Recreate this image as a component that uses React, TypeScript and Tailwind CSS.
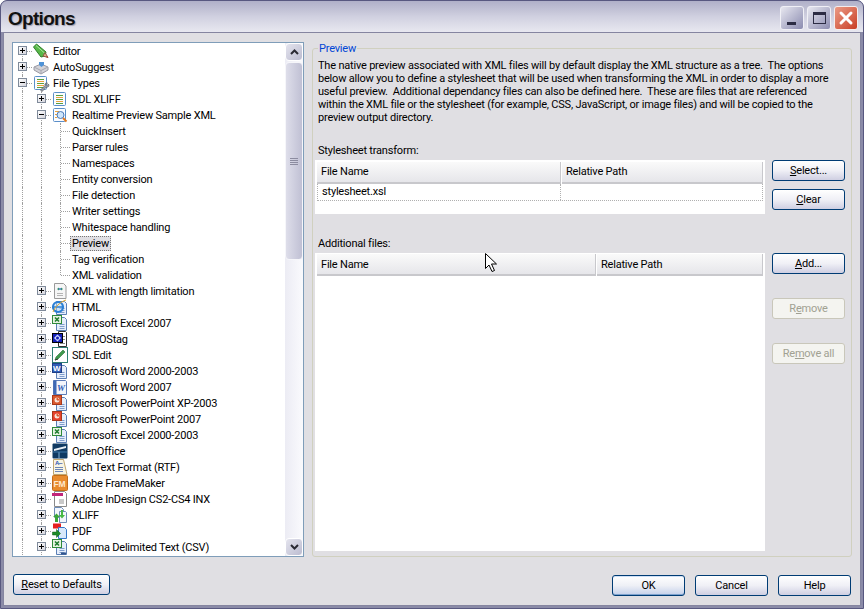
import React from "react";

type IconName =
  | "pencil" | "cube" | "filetypes" | "list" | "preview" | "xml" | "ie" | "excel" | "trados" | "edit"
  | "word" | "word07" | "ppt" | "ppt07" | "excel03" | "office" | "rtf" | "fm" | "indesign" | "xliff" | "pdf" | "csv";

interface TreeRow {
  label: string;
  depth: number;
  icon?: IconName;
  toggle?: "plus" | "minus";
  selected?: boolean;
}

const rows: TreeRow[] = [
  { label: "Editor", depth: 0, icon: "pencil", toggle: "plus" },
  { label: "AutoSuggest", depth: 0, icon: "cube", toggle: "plus" },
  { label: "File Types", depth: 0, icon: "filetypes", toggle: "minus" },
  { label: "SDL XLIFF", depth: 1, icon: "list", toggle: "plus" },
  { label: "Realtime Preview Sample XML", depth: 1, icon: "preview", toggle: "minus" },
  { label: "QuickInsert", depth: 2 },
  { label: "Parser rules", depth: 2 },
  { label: "Namespaces", depth: 2 },
  { label: "Entity conversion", depth: 2 },
  { label: "File detection", depth: 2 },
  { label: "Writer settings", depth: 2 },
  { label: "Whitespace handling", depth: 2 },
  { label: "Preview", depth: 2, selected: true },
  { label: "Tag verification", depth: 2 },
  { label: "XML validation", depth: 2 },
  { label: "XML with length limitation", depth: 1, icon: "xml", toggle: "plus" },
  { label: "HTML", depth: 1, icon: "ie", toggle: "plus" },
  { label: "Microsoft Excel 2007", depth: 1, icon: "excel", toggle: "plus" },
  { label: "TRADOStag", depth: 1, icon: "trados", toggle: "plus" },
  { label: "SDL Edit", depth: 1, icon: "edit", toggle: "plus" },
  { label: "Microsoft Word 2000-2003", depth: 1, icon: "word", toggle: "plus" },
  { label: "Microsoft Word 2007", depth: 1, icon: "word07", toggle: "plus" },
  { label: "Microsoft PowerPoint XP-2003", depth: 1, icon: "ppt", toggle: "plus" },
  { label: "Microsoft PowerPoint 2007", depth: 1, icon: "ppt07", toggle: "plus" },
  { label: "Microsoft Excel 2000-2003", depth: 1, icon: "excel03", toggle: "plus" },
  { label: "OpenOffice", depth: 1, icon: "office", toggle: "plus" },
  { label: "Rich Text Format (RTF)", depth: 1, icon: "rtf", toggle: "plus" },
  { label: "Adobe FrameMaker", depth: 1, icon: "fm", toggle: "plus" },
  { label: "Adobe InDesign CS2-CS4 INX", depth: 1, icon: "indesign", toggle: "plus" },
  { label: "XLIFF", depth: 1, icon: "xliff", toggle: "plus" },
  { label: "PDF", depth: 1, icon: "pdf", toggle: "plus" },
  { label: "Comma Delimited Text (CSV)", depth: 1, icon: "csv", toggle: "plus" },
];

function Doc() {
  return (
    <>
      <path d="M4.500 2.500h8l2 2v11h-10z" fill="#e6eefb" stroke="#5b7fb5" />
      <path d="M7.500 9.500h5M7.500 11.500h5M7.500 13.500h5" stroke="#7f9dcc" />
    </>
  );
}

function ListLines() {
  return (
    <>
      <rect x="1.500" y="1.500" width="12" height="13" rx="1" fill="#fbfcff" stroke="#5b8fc9" />
      <path d="M4 4.500h7" stroke="#5aa03f" />
      <path d="M4 6.500h7" stroke="#e8a33d" />
      <path d="M4 8.500h7" stroke="#5aa03f" />
      <path d="M4 10.500h7" stroke="#e8a33d" />
      <path d="M4 12.500h7" stroke="#5aa03f" />
    </>
  );
}

function Icon({ name }: { name: IconName }) {
  let art: React.ReactNode = null;
  switch (name) {
    case "pencil":
      art = (
        <>
          <path d="M.5 4l3-3 9.500 8-1 4-4 1z" fill="#58b848" stroke="#2f7d2a" />
          <path d="M3 2.500l9 8" stroke="#a8e39a" />
          <path d="M12 9.500l3 5-5-1.500z" fill="#e0b090" stroke="#8a5a40" />
          <path d="M14 13l1 1.500-2-.5z" fill="#d02020" />
        </>
      );
      break;
    case "cube":
      art = (
        <>
          <path d="M1 8l7-3 7 3v3l-7 4-7-4z" fill="#d3d3d8" stroke="#9a9aa4" />
          <path d="M1 8l7 3.500L15 8" fill="none" stroke="#a8a8b0" />
          <path d="M8 11.500V15" stroke="#a8a8b0" />
          <path d="M6 3h5v3l-2.500 2L6 6z" fill="#4f93d8" />
        </>
      );
      break;
    case "filetypes":
      art = (
        <>
          <ListLines />
          <path d="M15.500 9l-1.500 1.500-1-1 1.500-1.500c-1.500-.5-3 .5-2.500 2.500l-4.500 4.500 1.500 1.500 4.500-4.500c2 .5 3-1 2-3z" fill="#9aa0aa" stroke="#555a66" strokeWidth=".7" />
        </>
      );
      break;
    case "list":
      art = <ListLines />;
      break;
    case "preview":
      art = (
        <>
          <rect x="1.500" y="1.500" width="12" height="13" rx="1" fill="#fbfcff" stroke="#5b8fc9" />
          <path d="M3 4.500h4M3 7.500h2M3 10.500h2" stroke="#e8a33d" />
          <circle cx="8.500" cy="8" r="3.500" fill="#cfe6fb" stroke="#4a78b8" />
          <path d="M11 11l3.500 3.500" stroke="#e07a20" strokeWidth="2" />
        </>
      );
      break;
    case "xml":
      art = (
        <>
          <path d="M2.500 .5h9l2.500 2.500v12.500h-11.500z" fill="#f6f6f6" stroke="#9a9a9a" />
          <path d="M5 6l2-1.500v3zM11 6L9 4.500v3z" fill="#2e8f6e" />
          <circle cx="8" cy="6" r="1" fill="#3a6fc0" />
          <path d="M5 10.500h6M5 12.500h6" stroke="#b5b5b5" />
        </>
      );
      break;
    case "ie":
      art = (
        <>
          <Doc />
          <circle cx="6" cy="8" r="5" fill="#bcdcf6" fillOpacity=".5" stroke="#2a7fd6" strokeWidth="2.200" />
          <path d="M2 8h8" stroke="#2a7fd6" strokeWidth="1.500" />
          <path d="M1 13C3 8 8 3 14 1" fill="none" stroke="#e2a92e" />
        </>
      );
      break;
    case "excel":
    case "excel03":
    case "csv":
      art = (
        <>
          <Doc />
          <rect x="0.500" y="0.500" width="9" height="8" fill="#e7f3e2" stroke="#2f8a3a" />
          <path d="M3 2.500l4 4M7 2.500l-4 4" stroke="#1d7a2c" strokeWidth="1.500" />
          {name === "csv" && <path d="M9 14.500h5" stroke="#30548c" strokeWidth="2" />}
        </>
      );
      break;
    case "trados":
      art = (
        <>
          <path d="M6.500 .5h7l1 1v14h-8z" fill="#fff" stroke="#333" />
          <path d="M10 5.500h3M10 8.500h3M8 12.500h5" stroke="#888" />
          <rect x="0.500" y="2.500" width="10" height="9" fill="#1420b8" stroke="#000" />
          <path d="M5.500 3.500l3.500 3.500-3.500 3.500-3.500-3.500z" fill="#cfd8ff" />
          <circle cx="5.500" cy="7" r="1.500" fill="#1420b8" />
        </>
      );
      break;
    case "edit":
      art = (
        <>
          <rect x="0.500" y="0.500" width="15" height="15" fill="#fff" stroke="#2f7f74" />
          <path d="M3 13l1-3 7-7 2 2-7 7z" fill="#3f9a4c" stroke="#2b6e3a" strokeWidth=".6" />
          <path d="M3 13l3-1" stroke="#333" />
        </>
      );
      break;
    case "word":
      art = (
        <>
          <Doc />
          <rect x="0.500" y="0.500" width="9" height="9" fill="#2f5fb8" stroke="#1e3f86" />
          <text x="1" y="8" fontSize="8" fontWeight="700" fontFamily="Liberation Sans, sans-serif" fill="#fff">W</text>
        </>
      );
      break;
    case "word07":
      art = (
        <>
          <path d="M1.500 1.500h12l1 1v13h-13z" fill="#f4f6fb" stroke="#5c7cb8" />
          <path d="M1.500 1.500h3v14h-3z" fill="#3f69b5" />
          <text x="5" y="12" fontSize="9" fontWeight="700" fontStyle="italic" fontFamily="Liberation Serif, serif" fill="#2f5fb8">W</text>
        </>
      );
      break;
    case "ppt":
    case "ppt07":
      art = (
        <>
          <Doc />
          <rect x="0.500" y="0.500" width="9" height="9" fill={name === "ppt" ? "#d9592f" : "#e8412c"} stroke="#a8381a" />
          <circle cx="5" cy="5" r="2.500" fill="#f7e3d8" />
          <path d="M5 2.500v2.500h2.500" fill="#d9592f" stroke="#d9592f" />
        </>
      );
      break;
    case "office":
      art = (
        <>
          <rect x="0.500" y="0.500" width="15" height="15" rx="1" fill="#0f3a63" />
          <path d="M2 6l12-3v2L2 8z" fill="#e7eef5" />
          <path d="M7 9v6" stroke="#7fb0d8" />
          <path d="M1 9h14" stroke="#3c79ab" />
        </>
      );
      break;
    case "rtf":
      art = (
        <>
          <path d="M1.500 .5h10l3.500 15h-13.500z" fill="#f8f4e4" stroke="#c0a670" />
          <text x="3" y="6" fontSize="6" fontWeight="700" fontFamily="Liberation Sans, sans-serif" fill="#2a55b5">A</text>
          <path d="M6.500 4.500h4M3 8.500h8M3 10.500h8M3 12.500h8" stroke="#6d86b8" />
        </>
      );
      break;
    case "fm":
      art = (
        <>
          <rect x="0.500" y="0.500" width="15" height="15" rx="1" fill="#e88b2e" stroke="#c46d18" />
          <text x="1.500" y="11.500" fontSize="8.500" fontWeight="700" fontFamily="Liberation Sans, sans-serif" fill="#fde9cf">FM</text>
        </>
      );
      break;
    case "indesign":
      art = (
        <>
          <path d="M2.500 .5h10l2 2v13h-12z" fill="#fff" stroke="#8a8a8a" />
          <rect x="0" y="2" width="11" height="3" fill="#c2257a" />
          <rect x="7" y="8" width="5" height="5" fill="#c9c9c9" />
        </>
      );
      break;
    case "xliff":
      art = (
        <>
          <path d="M2.500 .5h7l2 2v8h-9z" fill="#f2f6fc" stroke="#6e8db8" />
          <path d="M7.500 4.500h6l1 1v10h-7z" fill="#f2f6fc" stroke="#6e8db8" />
          <path d="M3 15V10H1l3.500-3.500L8 10H6v5z" fill="#3aa63a" />
          <path d="M11 3v5h2l-3 3.500L7 8h2V3z" fill="#46b846" />
        </>
      );
      break;
    case "pdf":
      art = (
        <>
          <path d="M1 .5h8v5H1z" fill="#e62020" />
          <path d="M6.500 4.500h6l2 2v9h-8z" fill="#d8e8fa" stroke="#3778c8" />
          <path d="M.5 9h4V6.500l4 4-4 4V12h-4z" fill="#1d8c28" stroke="#0d5a16" strokeWidth=".5" />
        </>
      );
      break;
  }
  return (
    <svg width="16" height="16" viewBox="0 0 16 16" className="shrink-0 overflow-visible">
      {art}
    </svg>
  );
}

function Toggle({ kind }: { kind: "plus" | "minus" }) {
  return (
    <span className="absolute left-[5px] top-[3px] w-[9px] h-[9px] border border-[#7f8a9a] bg-gradient-to-br from-white to-[#d4d4dc] flex items-center justify-center">
      <span className="relative block w-[5px] h-px bg-black">
        {kind === "plus" && <span className="absolute left-[2px] -top-[2px] w-px h-[5px] bg-black" />}
      </span>
    </span>
  );
}

function Guide({ on }: { on: boolean }) {
  return (
    <span className="relative block w-[19px] h-4 shrink-0">
      {on && <span className="absolute left-[9px] top-0 h-4 border-l border-dotted border-[#a0a0a0]" />}
    </span>
  );
}

function TreeLine({ row, index }: { row: TreeRow; index: number }) {
  const lastChild = row.label === "XML validation";
  return (
    <div className="flex items-center h-4 whitespace-nowrap">
      {row.depth > 0 && <Guide on />}
      {row.depth > 1 && <Guide on />}
      <span className="relative block w-[19px] h-4 shrink-0">
        <span
          className={
            index === 0
              ? "absolute left-[9px] top-2 h-2 border-l border-dotted border-[#a0a0a0]"
              : lastChild
                ? "absolute left-[9px] top-0 h-2 border-l border-dotted border-[#a0a0a0]"
                : "absolute left-[9px] top-0 h-4 border-l border-dotted border-[#a0a0a0]"
          }
        />
        <span className="absolute left-[10px] top-2 w-[9px] border-t border-dotted border-[#a0a0a0]" />
        {row.toggle && <Toggle kind={row.toggle} />}
      </span>
      {row.icon && (
        <span className="ml-px mr-[2px]">
          <Icon name={row.icon} />
        </span>
      )}
      <span
        className={
          row.selected
            ? "px-px h-[15px] leading-[14px] bg-[#e0dfe3] border border-dotted border-[#777]"
            : "ml-px px-px h-4 pt-px leading-4"
        }
      >
        {row.label}
      </span>
    </div>
  );
}

function Chevron({ up }: { up?: boolean }) {
  return (
    <svg width="9" height="6" viewBox="0 0 9 6">
      <path d={up ? "M1 5l3.500-3.500L8 5" : "M1 1l3.500 3.500L8 1"} fill="none" stroke="#2a2a33" strokeWidth="2" />
    </svg>
  );
}

function ScrollBar() {
  return (
    <div className="w-[18px] shrink-0 flex flex-col bg-gradient-to-r from-[#ececf4] to-[#fafafd]">
      <div className="h-[18px] shrink-0 border border-white rounded-sm bg-gradient-to-br from-[#e4e4ee] to-[#bcbcd0] flex items-center justify-center">
        <Chevron up />
      </div>
      <div className="h-[198px] mt-px border border-[#f6f6fa] rounded-sm bg-gradient-to-r from-[#dedeea] to-[#c0c0d4] flex flex-col items-center justify-center gap-px">
        <span className="w-2 h-px bg-[#8c8ca0]" />
        <span className="w-2 h-px bg-[#8c8ca0]" />
        <span className="w-2 h-px bg-[#8c8ca0]" />
        <span className="w-2 h-px bg-[#8c8ca0]" />
      </div>
      <div className="flex-1" />
      <div className="h-[18px] shrink-0 border border-white rounded-sm bg-gradient-to-br from-[#e4e4ee] to-[#bcbcd0] flex items-center justify-center">
        <Chevron />
      </div>
    </div>
  );
}

function WinButton({ children, disabled, primary, className }: { children: React.ReactNode; disabled?: boolean; primary?: boolean; className?: string }) {
  const tone = disabled
    ? "border-[#c9c7ba] bg-[#f4f4f0] text-[#a1a192]"
    : primary
      ? "border-[#003c74] bg-gradient-to-b from-white via-[#eef0f6] to-[#c4d0ea] shadow-[inset_0_-1px_0_#7da2ce,inset_0_1px_0_#cfe0f7] text-black"
      : "border-[#003c74] bg-gradient-to-b from-white via-[#f0f0f6] to-[#cfcfe2] text-black";
  return <div className={`w-[73px] h-[21px] rounded-[3px] border flex items-center justify-center leading-none ${tone} ${className ?? ""}`}>{children}</div>;
}

function HeaderCell({ label, className }: { label: string; className: string }) {
  return (
    <div className={`h-[22px] flex items-center pl-1 bg-gradient-to-b from-[#fafafa] to-[#e6e6ea] border-b-2 border-r border-[#c8c8cc] ${className}`}>
      {label}
    </div>
  );
}

function CaptionButton({ children, close }: { children: React.ReactNode; close?: boolean }) {
  return (
    <div
      className={
        close
          ? "w-[24px] h-[24px] rounded-[3px] border border-[#f4ecec] bg-gradient-to-br from-[#ea9a85] to-[#c83a22] flex items-center justify-center"
          : "w-[24px] h-[24px] rounded-[3px] border border-[#f0f0f6] bg-gradient-to-br from-[#e8e8f0] to-[#8c8cb0] flex items-center justify-center"
      }
    >
      {children}
    </div>
  );
}

export default function App() {
  return (
    <div
      className="relative w-[864px] h-[609px] overflow-hidden flex flex-col text-[11px] tracking-[-0.2px] text-black bg-[#8b8ba8] rounded-t-[7px] border border-[#585880]"
      style={{ fontFamily: 'Roboto, "Liberation Sans", Arial, sans-serif' }}
    >
      {/* title bar */}
      <div className="h-[31px] shrink-0 flex items-center pl-[7px] pr-[5px] bg-gradient-to-b from-[#b0b0c8] via-[#d0d0e0] to-[#e8e8f0] rounded-t-[6px]">
        <span className="flex-1 pt-[4px] text-[19px] tracking-[-0.7px] font-bold text-[#111] leading-none [text-shadow:1px_1px_1px_#a0a0b0] font-['Liberation_Sans']">Options</span>
        <div className="flex gap-[3px] mt-[3px]">
          <CaptionButton>
            <span className="block w-[9px] h-[3px] mt-[11px] -ml-[1px] bg-[#2c2c44]" />
          </CaptionButton>
          <CaptionButton>
            <span className="block w-[13px] h-[12px] border border-t-[3px] border-[#2c2c44]" />
          </CaptionButton>
          <CaptionButton close>
            <svg width="16" height="16" viewBox="0 0 16 16">
              <path d="M3 3l10 10M13 3L3 13" stroke="#fff" strokeWidth="3" strokeLinecap="round" />
            </svg>
          </CaptionButton>
        </div>
      </div>

      {/* client area */}
      <div className="flex-1 min-h-0 mx-[2px] mb-[2px] border border-[#8585a0] bg-[#e0dfe3] flex flex-col px-[8px] pt-[9px]">
        <div className="flex h-[515px] shrink-0">
          {/* tree */}
          <div className="w-[292px] shrink-0 border border-[#7f9db9] bg-white flex overflow-hidden">
            <div className="flex-1 min-w-0 overflow-hidden">
              {rows.map((row, i) => (
                <TreeLine key={row.label} row={row} index={i} />
              ))}
            </div>
            <ScrollBar />
          </div>

          {/* options group */}
          <div className="relative ml-[8px] mt-[6px] w-[541px] h-[509px] border border-[#d0d0bf] rounded-[3px] pl-[2px]">
            <span className="absolute left-[5px] -top-[7px] bg-[#e0dfe3] px-px leading-[13px] text-[#0046d5]">Preview</span>
            <p className="pl-[3px] pt-[10px] leading-[13px] whitespace-pre">
              {"The native preview associated with XML files will by default display the XML structure as a tree.  The options\nbelow allow you to define a stylesheet that will be used when transforming the XML in order to display a more\nuseful preview.  Additional dependancy files can also be defined here.  These are files that are referenced\nwithin the XML file or the stylesheet (for example, CSS, JavaScript, or image files) and will be copied to the\npreview output directory."}
            </p>

            <div className="pl-[3px] mt-[20px] leading-[13px]">Stylesheet transform:</div>
            <div className="flex mt-[3px]">
              <div className="w-[450px] h-[54px] bg-white pt-[2px] px-[2px]">
                <div className="flex">
                  <HeaderCell label="File Name" className="w-[244px] mr-px pt-px" />
                  <HeaderCell label="Relative Path" className="flex-1 pt-px" />
                </div>
                <div className="flex h-[17px] border-b border-l border-r border-dotted border-[#b0b0b0] leading-[15px]">
                  <div className="w-[243px] pl-1 border-r border-dotted border-[#b0b0b0]">stylesheet.xsl</div>
                  <div className="flex-1" />
                </div>
              </div>
              <div className="ml-[7px] flex flex-col gap-[8px]">
                <WinButton><span><span className="underline">S</span>elect...</span></WinButton>
                <WinButton><span><span className="underline">C</span>lear</span></WinButton>
              </div>
            </div>

            <div className="pl-[3px] mt-[23px] leading-[13px]">Additional files:</div>
            <div className="flex mt-[3px]">
              <div className="w-[450px] h-[298px] bg-white pt-px px-[2px]">
                <div className="flex">
                  <HeaderCell label="File Name" className="w-[279px] mr-px pt-[2px]" />
                  <HeaderCell label="Relative Path" className="flex-1 pt-[2px]" />
                </div>
              </div>
              <div className="ml-[7px] flex flex-col">
                <WinButton><span><span className="underline">A</span>dd...</span></WinButton>
                <WinButton disabled className="mt-[24px]"><span>R<span className="underline">e</span>move</span></WinButton>
                <WinButton disabled className="mt-[24px]"><span>Re<span className="underline">m</span>ove all</span></WinButton>
              </div>
            </div>
          </div>
        </div>

        {/* footer */}
        <div className="flex items-start mt-[17px] pl-px">
          <div className="w-[97px] h-[21px] rounded-[3px] border border-[#003c74] bg-gradient-to-b from-white via-[#f0f0f6] to-[#cfcfe2] flex items-center justify-center leading-none">
            <span><span className="underline">R</span>eset to Defaults</span>
          </div>
          <div className="ml-auto flex gap-[10px] mt-px mr-[1px]">
            <WinButton primary>OK</WinButton>
            <WinButton>Cancel</WinButton>
            <WinButton>Help</WinButton>
          </div>
        </div>
      </div>

      {/* mouse pointer */}
      <svg width="14" height="22" viewBox="0 0 14 22" className="absolute left-[483px] top-[251px]">
        <path d="M1.500 1.500v15l3.500-3.500 3 6.500 2.500-1-3-6.500h5z" fill="#fff" stroke="#000" />
      </svg>
    </div>
  );
}
